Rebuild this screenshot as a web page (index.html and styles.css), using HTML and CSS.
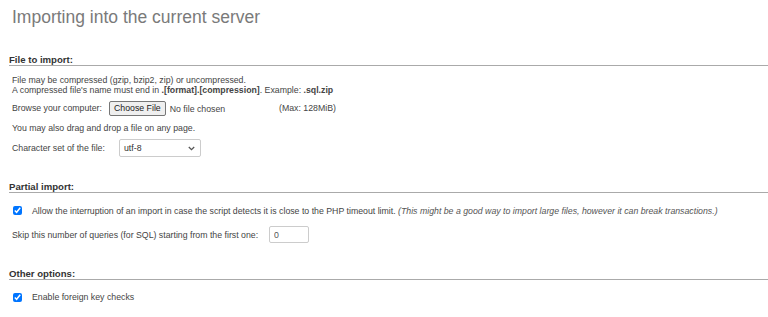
FILE: index.html
```html
<!DOCTYPE html>
<html lang="en">
<head>
  <meta charset="UTF-8">
  <title>Import</title>
  <link rel="stylesheet" href="styles.css">
</head>
<body>
  <div class="page">
    <h2 class="page-title">Importing into the current server</h2>

    <!-- File to import -->
    <div class="section section-file">
      <div class="legend">File to import:</div>
      <div class="notes">
        File may be compressed (gzip, bzip2, zip) or uncompressed.<br>
        A compressed file's name must end in <b>.[format].[compression]</b>. Example: <b>.sql.zip</b>
      </div>
      <div class="row row-browse">
        <label for="input_import_file">Browse your computer:</label>
        <input type="file" id="input_import_file" class="file-input">
        <span class="max-size">(Max: 128MiB)</span>
      </div>
      <div class="plain">You may also drag and drop a file on any page.</div>
      <div class="row row-charset">
        <label for="charset_of_file">Character set of the file:</label>
        <div class="select-wrap">
          <select id="charset_of_file" class="charset">
            <option>utf-8</option>
          </select>
          <svg class="chevron" width="7" height="5" viewBox="0 0 7 5"><path d="M0.8 1 L3.5 3.6 L6.2 1" fill="none" stroke="#555" stroke-width="1.3"/></svg>
        </div>
      </div>
    </div>

    <!-- Partial import -->
    <div class="section section-partial">
      <div class="legend">Partial import:</div>
      <div class="row check-row">
        <input type="checkbox" id="allow_interrupt" checked>
        <label for="allow_interrupt">Allow the interruption of an import in case the script detects it is close to the PHP timeout limit. <i class="hint">(This might be a good way to import large files, however it can break transactions.)</i></label>
      </div>
      <div class="row row-skip">
        <label for="skip_queries">Skip this number of queries (for SQL) starting from the first one:</label>
        <input type="text" id="skip_queries" class="skip" value="0">
      </div>
    </div>

    <!-- Other options -->
    <div class="section section-other">
      <div class="legend">Other options:</div>
      <div class="row check-row">
        <input type="checkbox" id="fk_checks" checked>
        <label for="fk_checks">Enable foreign key checks</label>
      </div>
    </div>
  </div>
</body>
</html>
```

FILE: styles.css
```css
body { margin:0; font-family:"Liberation Sans", Arial, sans-serif; background:#fff; color:#444; font-size:8.75px; }
.page { padding:7px 0 0 12px; }
.page-title {
  margin:0; font-size:17.5px; line-height:20px; font-weight:normal; color:#7a7a7a;
}

.section { margin-left:-3px; }
.legend {
  font-size:9.6px; font-weight:bold; color:#333; line-height:11px;
  border-bottom:1px solid #aaa; padding-left:0;
}
.section > *:not(.legend) { margin-left:3px; }

.section-file { margin-top:27px; }
.section-partial { margin-top:24px; }
.section-other { margin-top:25px; }

.notes { line-height:10px; margin-top:9px; }
.plain { line-height:10px; margin-top:7px; }

.row { display:flex; align-items:center; }
.row-browse { margin-top:5px; height:16px; }
.row-browse label { width:97px; }
.file-input {
  font-family:inherit; font-size:8.75px; color:#444; width:160px; margin:0 10px 0 0;
}
.file-input::file-selector-button {
  font-family:inherit; font-size:8.75px; color:#222; background:#efefef;
  border:1px solid #767676; border-radius:2px; padding:1px 4px; height:15px; margin-right:4px;
}
.max-size { color:#444; }

.row-charset { margin-top:6px; height:18px; }
.row-charset label { width:107px; }
.select-wrap { position:relative; width:82px; height:18px; }
.charset {
  appearance:none; -webkit-appearance:none;
  width:82px; height:18px; font-family:inherit; font-size:8.75px; color:#333;
  border:1px solid #ccc; border-radius:2px; background:#fff; padding:0 4px; margin:0;
}
.chevron { position:absolute; right:6px; top:7px; pointer-events:none; }

.check-row { height:10px; line-height:10px; }
.section-partial .check-row { margin-top:12.5px; }
.section-other .check-row { margin-top:12px; }
.check-row input {
  width:9px; height:9px; margin:0 10px 0 1px; accent-color:#0075ff;
}
.hint { color:#555; }

.row-skip { margin-top:10.5px; height:17px; }
.row-skip label { margin-right:11px; }
.skip {
  width:40px; height:17px; box-sizing:border-box; font-family:inherit; font-size:8.75px; color:#555;
  border:1px solid #ccc; border-radius:2px; padding:0 4px;
}
```
